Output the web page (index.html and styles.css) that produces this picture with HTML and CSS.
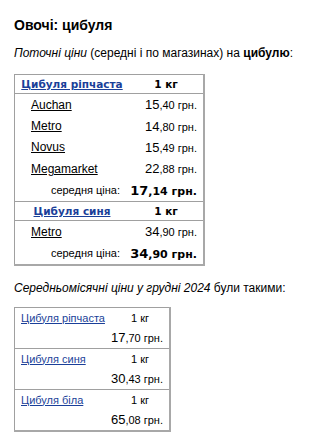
FILE: index.html
```html
<!DOCTYPE html>
<html lang="uk">
<head>
<meta charset="utf-8">
<title>Овочі: цибуля</title>
<link rel="stylesheet" href="styles.css">
</head>
<body>
<h1 class="title">Овочі: цибуля</h1>
<p class="lead"><em>Поточні ціни</em> (середні і по магазинах) на <b>цибулю</b>:</p>

<table class="prices">
  <tbody class="group">
    <tr class="head">
      <th class="name"><a href="#">Цибуля ріпчаста</a></th>
      <th class="unit">1 кг</th>
    </tr>
    <tr class="shop">
      <td class="name"><a href="#">Auchan</a></td>
      <td class="cost"><span class="big">15</span>,40 грн.</td>
    </tr>
    <tr class="shop">
      <td class="name"><a href="#">Metro</a></td>
      <td class="cost"><span class="big">14</span>,80 грн.</td>
    </tr>
    <tr class="shop">
      <td class="name"><a href="#">Novus</a></td>
      <td class="cost"><span class="big">15</span>,49 грн.</td>
    </tr>
    <tr class="shop">
      <td class="name"><a href="#">Megamarket</a></td>
      <td class="cost"><span class="big">22</span>,88 грн.</td>
    </tr>
    <tr class="avg">
      <td class="label">середня ціна:</td>
      <td class="total"><span class="big">17</span>,14 грн.</td>
    </tr>
  </tbody>
  <tbody class="group">
    <tr class="head">
      <th class="name"><a href="#">Цибуля синя</a></th>
      <th class="unit">1 кг</th>
    </tr>
    <tr class="shop">
      <td class="name"><a href="#">Metro</a></td>
      <td class="cost"><span class="big">34</span>,90 грн.</td>
    </tr>
    <tr class="avg">
      <td class="label">середня ціна:</td>
      <td class="total"><span class="big">34</span>,90 грн.</td>
    </tr>
  </tbody>
</table>

<p class="lead month"><em>Середньомісячні ціни у грудні 2024</em> були такими:</p>

<table class="monthly">
  <tbody class="group">
    <tr>
      <td class="name"><a href="#">Цибуля ріпчаста</a></td>
      <td class="unit">1 кг</td>
    </tr>
    <tr>
      <td></td>
      <td class="cost"><span class="big">17</span>,70 грн.</td>
    </tr>
  </tbody>
  <tbody class="group">
    <tr>
      <td class="name"><a href="#">Цибуля синя</a></td>
      <td class="unit">1 кг</td>
    </tr>
    <tr>
      <td></td>
      <td class="cost"><span class="big">30</span>,43 грн.</td>
    </tr>
  </tbody>
  <tbody class="group">
    <tr>
      <td class="name"><a href="#">Цибуля біла</a></td>
      <td class="unit">1 кг</td>
    </tr>
    <tr>
      <td></td>
      <td class="cost"><span class="big">65</span>,08 грн.</td>
    </tr>
  </tbody>
</table>
</body>
</html>
```

FILE: styles.css
```css
body {
  margin: 0;
  padding: 0 14px;
  font-family: "Liberation Sans", Arial, sans-serif;
  color: #000;
  background: #fff;
}

.title {
  margin: 0;
  padding-top: 16px;
  font-size: 14px;
  line-height: 18px;
  font-weight: bold;
}

.lead {
  margin: 0;
  padding-top: 11px;
  font-size: 12px;
  line-height: 16px;
  white-space: nowrap;
}

.lead.month {
  padding-top: 14px;
}

table {
  border-collapse: collapse;
  border: 1px solid #a0a0a0;
  border-right: 2px solid #a8a8a8;
  border-bottom: 2px solid #a8a8a8;
}

a {
  color: #1a3f99;
}

/* current prices */
.prices {
  margin-top: 13px;
  width: 191px;
}

.prices .group + .group {
  border-top: 1px solid #a0a0a0;
}

.prices .head th {
  font-family: "DejaVu Sans", Verdana, sans-serif;
  font-weight: bold;
  font-size: 10.5px;
  height: 18px;
  padding: 0;
  text-align: center;
  border-bottom: 1px solid #a0a0a0;
}

.prices .head .name {
  width: 114px;
}

.prices td {
  padding: 0;
  height: 21.4px;
  font-size: 11px;
}

.prices .shop .name {
  padding-left: 16px;
  font-size: 12px;
}

.prices .shop .name a {
  color: #000;
}

.cost {
  text-align: right;
  padding-right: 6px !important;
  white-space: nowrap;
}

.cost .big {
  font-size: 13px;
}

.prices .avg .label {
  text-align: right;
  padding-right: 9px;
  font-size: 11px;
}

.prices .avg .total {
  text-align: right;
  padding-right: 6px;
  font-family: "DejaVu Sans", Verdana, sans-serif;
  font-weight: bold;
  font-size: 11px;
  white-space: nowrap;
}

.prices .avg .total .big {
  font-size: 13px;
}

/* monthly averages */
.monthly {
  margin-top: 11px;
  width: 157px;
}

.monthly .group + .group {
  border-top: 1px solid #a0a0a0;
}

.monthly td {
  padding: 0;
  height: 20px;
  font-size: 11px;
}

.monthly .name {
  width: 90px;
  padding-left: 6px;
  white-space: nowrap;
}

.monthly .unit {
  text-align: center;
}

.monthly .cost {
  font-size: 11px;
}

.monthly .cost .big {
  font-size: 13px;
}
```
